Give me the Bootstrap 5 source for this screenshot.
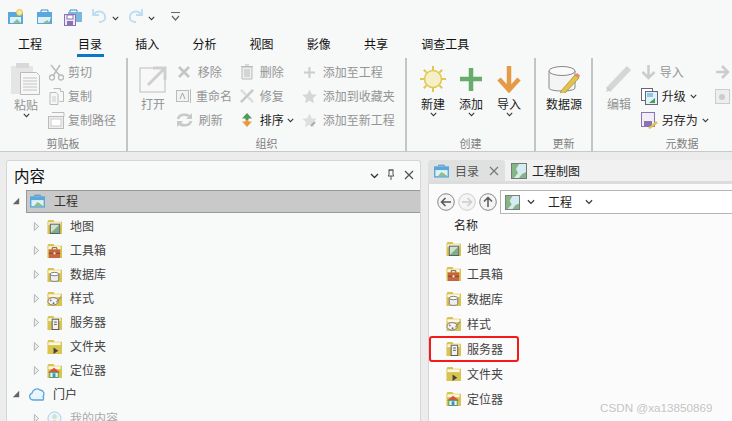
<!DOCTYPE html>
<html lang="zh"><head><meta charset="utf-8"><title>ArcGIS Pro</title>
<link href="https://cdn.jsdelivr.net/npm/bootstrap@5.3.0/dist/css/bootstrap.min.css" rel="stylesheet">
<style>
html,body{width:732px;height:421px;overflow:hidden}
body{background:#ececec;font:12px/16px "Noto Sans CJK SC","Liberation Sans",sans-serif;color:#222}
svg{display:block;flex:none}
.appshell{width:732px;height:421px;overflow:hidden}
.topband{background:#f7f8f8;height:152px;border-bottom:1px solid #c8c8c8}
.qat{height:30px;padding:8px 0 0 8px}
.qslot{width:28px}.qslotn{width:16px}.qchev{width:20px}.qlast{padding:4px 0 0 7px}
.tabrow{height:28px;padding-left:18px}
.rtab{position:relative;width:57.2px;height:28px;line-height:28px;color:#111}
.rtab.first{width:60px}
.rtab.on::after{content:"";position:absolute;left:-1px;top:24px;width:27px;height:3px;background:#0878c8}
.ribbon{height:94px}
.grp{position:relative;height:94px;border-right:2px solid #c4c5c5;flex:none}
.g1{width:128px}.g2{width:279px}.g3{width:129px}.g4{width:57px}.g5{width:178px;border:0}
.grplabel{position:absolute;left:0;right:0;top:77px;text-align:center;color:#808080;line-height:16px;font-size:11px}
.big{position:absolute;top:7px;text-align:center;color:#222;width:44px}
.big svg{margin:0 auto}
.bigtxt{height:16px;margin-top:3px}
.dim{color:#949494}
.smallcol{position:absolute;top:2px}
.sm{height:24px;display:flex;align-items:center;white-space:nowrap;gap:3px}
.chev{margin:3px auto 0}
.b1{left:4px;top:5px}.b1 .bigtxt{margin-top:1px}
.c1{left:48px}
.b2{left:3px}.c2{left:48px}.c3{left:112px}.c4{left:174px}
.b3{left:4px}.b4{left:42px}.b5{left:80px}
.b6{left:6px}.b7{left:4px}.c5{left:48px}.c6{left:122px}
.c5 .sm{gap:1px}
.c5 .sm svg+svg{margin-left:3px}
.panes{height:269px;padding-top:8px;gap:7px}
.leftpane{width:415px;margin-left:6px;background:#f8f9f9;border:1px solid #d6d6d6;border-bottom:0;border-radius:3px 3px 0 0;height:262px}
.panetitle{height:28px;padding:4px 5px 0 7px;font-size:15.5px;line-height:20px;color:#111}
.winctl{margin-left:auto;gap:6px;padding-top:4px}
.troot{height:24px;padding-left:5px}
.troot.selrow{margin-bottom:1px}
.tree-sel{margin-left:6px;flex:1;height:23px;background:#c9c9c9;border:1px solid #999;border-right:0;display:flex;align-items:center;padding-left:3px;color:#333}
.tree-sel svg{margin-right:9px}
.trow{height:24px;padding-left:26px;color:#444}
.trow .tw{margin-right:7px}
.trow svg+svg{margin-right:8px}
.rootplain{margin-left:9px;color:#333}
.rootplain svg{margin-right:7px}
.faded{color:#aaa}
.rightpane{width:304px;height:262px;background:#fbfbfb;border-left:1px solid #d6d6d6}
.ptabs{height:24px;background:#f1f1f1;border-bottom:3px solid #dcdcdc;margin-left:-1px}
.ptab{height:21px;display:flex;align-items:center;padding:0 6px;gap:6px;color:#444}
.ptab.on{background:#dfe0e0;border-radius:3px 3px 0 0;width:77px;color:#555}
.ptab.off{color:#222;padding-left:6px;gap:5px}
.navbarline{height:30px;padding:6px 0 0 8px}
.navbtn{margin:3px 3px 0 0}
.addr{flex:1;height:24px;background:#fff;border:1px solid #b5b5b5;border-right:0;display:flex;align-items:center;padding-left:4px;color:#222}
.addrlabel{margin:0 6px 0 13px}
.addrchev{margin-left:7px}
.colhead{height:22px;padding-left:25px;line-height:22px;color:#222}
.lrow{position:relative;height:25px;padding-left:17px;gap:6px;color:#444}
.lrow.mark-red::before{content:"";position:absolute;left:0;top:0;width:90px;height:26px;border:2.5px solid #f51a1a;border-radius:3px}
.wm{position:absolute;left:600px;top:400px;font:11.7px/16px "Liberation Sans",sans-serif;color:#c4c4c4;text-shadow:1px 1px 0 #fff}
</style></head><body>
<svg width="0" height="0" class="position-absolute">
<defs>
<symbol id="fold" viewBox="0 0 16 16"><path d="M.5 3 1.500 1h5.500l1 2h8v13H.5z" fill="#d9c44f"/><path d="M1.500 3.500h13v3h-13z" fill="#fbf7e0"/></symbol>
<symbol id="tri" viewBox="0 0 8 12"><path d="M1.500 1.500 6.500 6 1.500 10.500z" fill="#eee" stroke="#aaa"/></symbol>
<symbol id="case" viewBox="0 0 16 14"><path d="M5 2V.8h6V2" fill="none" stroke="#3d8fcf"/><rect y="2" width="16" height="12" fill="#5aa7dc"/><path d="M1.500 6h13v6.500h-13z" fill="#dff0f7"/><path d="M4 12.500 8 8l3 2 3.500 2.500z" fill="#8fbf8a"/></symbol>
<symbol id="mapic" viewBox="0 0 16 16"><rect x=".5" y=".5" width="15" height="15" fill="#d5ecf3" stroke="#777"/><path d="M1 1h7L5 6l2 4-4 5H1zM15 9v6H8l3-4z" fill="#86b685"/></symbol>
<symbol id="chv" viewBox="0 0 9 6"><path d="M1 1l3.500 3.500L8 1" fill="none" stroke="#333" stroke-width="1.300"/></symbol>
<symbol id="dtri" viewBox="0 0 10 10"><path d="M9 1v8H1z" fill="#666"/></symbol>
<symbol id="imap" viewBox="0 0 16 16"><use href="#fold"/><rect x="3.500" y="5.500" width="10" height="10" fill="#cde3cf" stroke="#556"/><path d="M4 15l9-9v9z" fill="#7fae86"/></symbol>
<symbol id="itool" viewBox="0 0 16 16"><use href="#fold"/><rect x="2" y="7" width="12" height="9" fill="#c8643f"/><path d="M5.500 7V5h5v2M2 11h12" fill="none" stroke="#7a4a30"/><path d="M7 10h2v2H7z" fill="#fff"/></symbol>
<symbol id="idb" viewBox="0 0 16 16"><use href="#fold"/><path d="M3.500 7.500v6.500c0 1.800 9 1.800 9 0V7.500" fill="#eee" stroke="#777"/><ellipse cx="8" cy="7.500" rx="4.500" ry="1.800" fill="#fff" stroke="#777"/></symbol>
<symbol id="istyle" viewBox="0 0 16 16"><use href="#fold"/><ellipse cx="6.500" cy="11" rx="5.500" ry="4" fill="#f3f3f3" stroke="#777"/><path d="M10 12l5-6" stroke="#998" stroke-width="1.500"/><circle cx="4" cy="10" r="1" fill="#c8643f"/><circle cx="7" cy="13" r="1" fill="#666"/></symbol>
<symbol id="isrv" viewBox="0 0 16 16"><use href="#fold"/><rect x="5.500" y="4.500" width="7" height="11" fill="#f2f2f2" stroke="#555"/><path d="M7.500 7.500h3M7.500 10h3" stroke="#555"/></symbol>
<symbol id="ifile" viewBox="0 0 16 16"><use href="#fold"/><path d="M7 9l5 3.500L7 16z" fill="#444"/></symbol>
<symbol id="iloc" viewBox="0 0 16 16"><use href="#fold"/><path d="M1 10l6.500-5L14 10" fill="#d8523e"/><rect x="3" y="10" width="9" height="5.500" fill="#e5f1f5" stroke="#4f9a5a"/><rect x="6" y="11" width="3" height="4" fill="#3d8fcf"/></symbol>
</defs></svg>
<div class="appshell d-flex flex-column">
<div class="topband">
<div class="qat d-flex align-items-start">
<div class="qslot"><svg width="17" height="17" viewBox="0 0 17 17"><rect y="4" width="15" height="12" fill="#5aa7dc"/><path d="M2 9h11v6H2z" fill="#dff0f7"/><path d="M5 15l4-4 4 4z" fill="#8fbf8a"/><circle cx="11.500" cy="4.500" r="3" fill="#f3e9a8" stroke="#dfc43f"/></svg></div>
<div class="qslot"><svg width="17" height="17" viewBox="0 0 17 17"><path d="M5 4V2h7v2" fill="none" stroke="#3d8fcf"/><rect x="1" y="4" width="15" height="12" fill="#5aa7dc"/><path d="M2 9h13l-2 6H2z" fill="#dff0f7"/><path d="M7 15l4-3 3 3z" fill="#8fbf8a"/></svg></div>
<div class="qslot"><svg width="18" height="18" viewBox="0 0 18 18"><path d="M6 4V2h7v2" fill="none" stroke="#3d8fcf"/><rect x="4" y="4" width="14" height="10" fill="#7db7de"/><rect x=".5" y="6.500" width="11" height="11" fill="#efeaf5" stroke="#8a72b5"/><rect x="3" y="7" width="6" height="4" fill="#fff" stroke="#8a72b5"/><rect x="3" y="13" width="6" height="4" fill="#8a72b5"/></svg></div>
<div class="qslotn"><svg width="15" height="15" viewBox="0 0 15 15"><path d="M2 6c3-4 10-3 11 2s-3 6-6 6" fill="none" stroke="#bcdcf2" stroke-width="1.800"/><path d="M1 1v6h6" fill="none" stroke="#bcdcf2" stroke-width="1.800"/></svg></div>
<div class="qslotn pt-2 ps-1"><svg width="7" height="5"><use href="#chv"/></svg></div>
<div class="qslotn ms-1"><svg width="15" height="15" viewBox="0 0 15 15"><path d="M13 6C10 2 3 3 2 8s3 6 6 6" fill="none" stroke="#bcdcf2" stroke-width="1.800"/><path d="M14 1v6H8" fill="none" stroke="#bcdcf2" stroke-width="1.800"/></svg></div>
<div class="qchev pt-2 ps-1"><svg width="7" height="5"><use href="#chv"/></svg></div>
<div class="qchev qlast"><svg width="9" height="10" viewBox="0 0 9 10"><path d="M0 .5h9" stroke="#666"/><path d="M1 4l3.500 4L8 4" fill="none" stroke="#666" stroke-width="1.200"/></svg></div>
</div>
<div class="tabrow d-flex">
<div class="rtab first">工程</div><div class="rtab on">目录</div><div class="rtab">插入</div><div class="rtab">分析</div><div class="rtab">视图</div><div class="rtab">影像</div><div class="rtab">共享</div><div class="rtab">调查工具</div>
</div>
<div class="ribbon d-flex">
<div class="grp g1">
<div class="big dim b1"><svg width="30" height="33" viewBox="0 0 30 33"><rect x="0" y="3" width="22" height="28" fill="#e5e5e5"/><rect x="5" y="0" width="13" height="5" fill="#d8d8d8"/><path d="M9.500 9.500h16l3 3v19h-19z" fill="#f7f7f7" stroke="#bbb"/><path d="M12 15h14M12 18h14M12 21h14M12 24h14M12 27h14" stroke="#c4c4c4"/></svg><div class="bigtxt">粘贴</div><svg class="chev" width="7" height="5"><use href="#chv"/></svg></div>
<div class="smallcol c1">
<div class="sm dim"><svg width="17" height="17" viewBox="0 0 17 17"><path d="M3 1l9 11M12 1 5 12" stroke="#bbb" stroke-width="1.500"/><circle cx="4" cy="13.500" r="2.500" fill="none" stroke="#bbb" stroke-width="1.300"/><circle cx="13" cy="13.500" r="2.500" fill="none" stroke="#bbb" stroke-width="1.300"/></svg>剪切</div>
<div class="sm dim"><svg width="17" height="17" viewBox="0 0 17 17"><path d="M5.500.5h7v3h3v10h-4M2 4.500h6l2 2v10H2z" fill="#f7f7f7" stroke="#bbb"/><path d="M4 9h4M4 11h4M4 13h4" stroke="#ccc"/></svg>复制</div>
<div class="sm dim"><svg width="17" height="17" viewBox="0 0 17 17"><path d="M4 .5h12v4" fill="none" stroke="#bbb"/><rect x=".5" y="4.500" width="15" height="12" fill="#eee" stroke="#bbb"/><rect x="3" y="7" width="10" height="7" fill="#fff" stroke="#ccc"/></svg>复制路径</div>
</div>
<div class="grplabel">剪贴板</div>
</div>
<div class="grp g2">
<div class="big dim b2"><svg width="28" height="28" viewBox="0 0 28 28"><rect x="1" y="3" width="25" height="24" fill="#f8f8f8" stroke="#bdbdbd"/><path d="M9 20 25 4M14 3h12v12" fill="none" stroke="#cfcfcf" stroke-width="3"/></svg><div class="bigtxt">打开</div></div>
<div class="smallcol c2">
<div class="sm dim"><svg width="16" height="16" viewBox="0 0 16 16"><path d="M3 3l10 10M13 3 3 13" stroke="#c4c4c4" stroke-width="2.500"/></svg>&nbsp;移除</div>
<div class="sm dim"><svg width="17" height="16" viewBox="0 0 17 16"><rect x=".5" y="2.500" width="12" height="11" fill="#f2f2f2" stroke="#bbb"/><path d="M14.500 1v14" stroke="#bbb"/><path d="M4 11l2.500-6L9 11" fill="none" stroke="#aaa"/></svg>重命名</div>
<div class="sm dim"><svg width="17" height="16" viewBox="0 0 17 16"><path d="M2 7c1-5 10-6 13-1M15 9c-1 5-10 6-13 1" fill="none" stroke="#c8c8c8" stroke-width="2.500"/><path d="M16 1v6h-6M1 15V9h6" fill="#c8c8c8"/></svg>&nbsp;刷新</div>
</div>
<div class="smallcol c3">
<div class="sm dim"><svg width="14" height="16" viewBox="0 0 14 16"><path d="M2 3h10v12H2z" fill="#eee" stroke="#bbb"/><path d="M1 2.500h12M5 1h4M5 5v8M7 5v8M9 5v8" stroke="#bbb"/></svg>&nbsp;删除</div>
<div class="sm dim"><svg width="14" height="16" viewBox="0 0 16 16"><path d="M1 15 15 1" stroke="#c8c8c8" stroke-width="3"/><path d="M1 1l6 6M9 9l6 6" stroke="#ddd" stroke-width="3"/></svg>&nbsp;修复</div>
<div class="sm sort-on"><svg width="14" height="16" viewBox="0 0 14 16"><path d="M7 1 2 6.500h3.500V8h3V6.500H12z" fill="#4f9a5a"/><path d="M7 15 2 9.500h3.500V8h3v1.500H12z" fill="#e79a3d"/></svg>&nbsp;排序 <svg width="7" height="5"><use href="#chv"/></svg></div>
</div>
<div class="smallcol c4">
<div class="sm dim"><svg width="15" height="15" viewBox="0 0 15 15"><path d="M7.500 2v11M2 7.500h11" stroke="#ccc" stroke-width="2"/></svg>&nbsp;添加至工程</div>
<div class="sm dim"><svg width="15" height="15" viewBox="0 0 15 15"><path d="M7.500.5l2.200 4.700 5 .6-3.700 3.400 1 5-4.500-2.500L3 14.200l1-5L.3 5.800l5-.6z" fill="#d6d6d6"/></svg>&nbsp;添加到收藏夹</div>
<div class="sm dim"><svg width="15" height="15" viewBox="0 0 15 15"><path d="M7.500.5l2.200 4.700 5 .6-3.700 3.400 1 5-4.500-2.500L3 14.200l1-5L.3 5.800l5-.6z" fill="#dedede"/><path d="M9 13l4-4" stroke="#aaa" stroke-width="2"/></svg>&nbsp;添加至新工程</div>
</div>
<div class="grplabel">组织</div>
</div>
<div class="grp g3">
<div class="big b3"><svg width="28" height="28" viewBox="0 0 28 28"><circle cx="14" cy="14" r="8.500" fill="#f5efc8" stroke="#e0c84f" stroke-width="1.500"/><path d="M14 1v4M14 23v4M1 14h4M23 14h4M4.800 4.800l2.800 2.800M20.400 20.400l2.800 2.800M4.800 23.200l2.800-2.800M20.400 7.600l2.800-2.800" stroke="#e0c84f" stroke-width="2"/></svg><div class="bigtxt">新建</div><svg class="chev" width="7" height="5"><use href="#chv"/></svg></div>
<div class="big b4"><svg width="28" height="28" viewBox="0 0 28 28"><path d="M14 3v23M3 14h22" stroke="#66ac6b" stroke-width="4.500"/></svg><div class="bigtxt">添加</div><svg class="chev" width="7" height="5"><use href="#chv"/></svg></div>
<div class="big b5"><svg width="28" height="28" viewBox="0 0 28 28"><path d="M14 1v24M4 14l10 11 10-11" fill="none" stroke="#e79a45" stroke-width="4.500"/></svg><div class="bigtxt">导入</div><svg class="chev" width="7" height="5"><use href="#chv"/></svg></div>
<div class="grplabel">创建</div>
</div>
<div class="grp g4">
<div class="big b6"><svg width="32" height="28" viewBox="0 0 32 28"><path d="M1 6v17c0 4 26 4 26 0V6" fill="#f4f4f4" stroke="#888"/><ellipse cx="14" cy="6" rx="13" ry="4.500" fill="#fafafa" stroke="#888"/><path d="M13 26 27 10l4 3-14 15-5 1z" fill="#e6c24a" stroke="#8a7a30" stroke-width=".6"/><path d="M27 10l2-2 3 2.500-1 2.500z" fill="#e88a70"/></svg><div class="bigtxt">数据源</div></div>
<div class="grplabel">更新</div>
</div>
<div class="grp g5">
<div class="big dim b7"><svg width="28" height="28" viewBox="0 0 28 28"><path d="M3 25 24 3" stroke="#d6d6d6" stroke-width="6"/><path d="M1 27l2-5 3 3z" fill="#ccc"/></svg><div class="bigtxt">编辑</div></div>
<div class="smallcol c5">
<div class="sm dim"><svg width="15" height="16" viewBox="0 0 15 16"><path d="M7.500 1v13M1.500 8l6 6 6-6" fill="none" stroke="#ccc" stroke-width="2.500"/></svg>&nbsp;导入</div>
<div class="sm"><svg width="17" height="17" viewBox="0 0 17 17"><rect x=".5" y=".5" width="11" height="12" fill="#fff" stroke="#667"/><rect x="4.500" y="3.500" width="12" height="13" fill="#dff2fa" stroke="#667"/><path d="M6 6h6M6 8h6" stroke="#3d9bd6"/><path d="M8 15l6-5v5z" fill="#4f9a5a"/></svg>&nbsp;升级 <svg width="7" height="5"><use href="#chv"/></svg></div>
<div class="sm"><svg width="17" height="17" viewBox="0 0 17 17"><rect x=".5" y=".5" width="13" height="14" fill="#f2eef8" stroke="#8a72b5"/><rect x="3" y="9" width="8" height="5.500" fill="#8a72b5"/><path d="M7 16l8-7 2 2-8 6z" fill="#e6c24a"/></svg>&nbsp;另存为 <svg width="7" height="5"><use href="#chv"/></svg></div>
</div>
<div class="smallcol c6">
<div class="sm"><svg width="15" height="14" viewBox="0 0 15 14"><path d="M1 7h12M7 1l6 6-6 6" fill="none" stroke="#ccc" stroke-width="2.500"/></svg></div>
<div class="sm"><svg width="15" height="15" viewBox="0 0 15 15"><rect x=".5" y=".5" width="14" height="14" fill="#eee" stroke="#ccc"/><circle cx="7" cy="8" r="3" fill="#ccc"/></svg></div>
</div>
<div class="grplabel">元数据</div>
</div>
</div>
</div>
<div class="panes d-flex">
<section class="leftpane">
<div class="panetitle d-flex">内容
<div class="winctl d-flex align-items-start"><svg class="mt-1" width="9" height="6"><use href="#chv"/></svg><svg width="12" height="12" viewBox="0 0 12 12"><path d="M4 1h4v5l1 1H3l1-1zM6 7v4M3.500 1h5" fill="none" stroke="#555"/></svg><svg width="12" height="12" viewBox="0 0 12 12"><path d="M2 2l8 8M10 2l-8 8" stroke="#555" stroke-width="1.300"/></svg></div></div>
<div class="troot selrow d-flex align-items-center"><svg width="8" height="8"><use href="#dtri"/></svg><div class="tree-sel"><svg width="15" height="14"><use href="#case"/></svg><span>工程</span></div></div>
<div class="trow d-flex align-items-center"><svg class="tw" width="7" height="11"><use href="#tri"/></svg><svg width="15" height="15"><use href="#imap"/></svg>地图</div>
<div class="trow d-flex align-items-center"><svg class="tw" width="7" height="11"><use href="#tri"/></svg><svg width="15" height="15"><use href="#itool"/></svg>工具箱</div>
<div class="trow d-flex align-items-center"><svg class="tw" width="7" height="11"><use href="#tri"/></svg><svg width="15" height="15"><use href="#idb"/></svg>数据库</div>
<div class="trow d-flex align-items-center"><svg class="tw" width="7" height="11"><use href="#tri"/></svg><svg width="15" height="15"><use href="#istyle"/></svg>样式</div>
<div class="trow d-flex align-items-center"><svg class="tw" width="7" height="11"><use href="#tri"/></svg><svg width="15" height="15"><use href="#isrv"/></svg>服务器</div>
<div class="trow d-flex align-items-center"><svg class="tw" width="7" height="11"><use href="#tri"/></svg><svg width="15" height="15"><use href="#ifile"/></svg>文件夹</div>
<div class="trow d-flex align-items-center"><svg class="tw" width="7" height="11"><use href="#tri"/></svg><svg width="15" height="15"><use href="#iloc"/></svg>定位器</div>
<div class="troot d-flex align-items-center"><svg width="8" height="8"><use href="#dtri"/></svg><div class="rootplain d-flex align-items-center"><svg width="17" height="14" viewBox="0 0 17 14"><path d="M4 13a3.500 3.500 0 0 1-1-6.800A5 5 0 0 1 11 3a4 4 0 0 1 3 6.500 3 3 0 0 1 0 3.500z" fill="#eaf5fc" stroke="#58a7dc" stroke-width="1.300"/></svg><span>门户</span></div></div>
<div class="trow d-flex align-items-center faded"><svg class="tw" width="7" height="11"><use href="#tri"/></svg><svg width="15" height="15" viewBox="0 0 16 16"><circle cx="8" cy="8" r="7" fill="#eaf5fc" stroke="#a9cde6"/><circle cx="8" cy="6" r="2.500" fill="#cfe3c8"/><path d="M3 14c1-5 9-5 10 0z" fill="#b5d6ae"/></svg>我的内容</div>
</section>
<section class="rightpane flex-grow-1">
<div class="ptabs d-flex">
<div class="ptab on"><svg width="15" height="14"><use href="#case"/></svg>目录<svg class="ms-auto" width="10" height="10" viewBox="0 0 10 10"><path d="M1 1l8 8M9 1 1 9" stroke="#777" stroke-width="1.200"/></svg></div>
<div class="ptab off"><svg width="16" height="16"><use href="#mapic"/></svg>工程制图</div>
</div>
<div class="navbarline d-flex">
<svg class="navbtn" width="18" height="18" viewBox="0 0 18 18"><circle cx="9" cy="9" r="8.300" fill="#f4f4f4" stroke="#888"/><path d="M14 9H5M8.500 5 4.500 9l4 4" fill="none" stroke="#555" stroke-width="1.500"/></svg>
<svg class="navbtn" width="18" height="18" viewBox="0 0 18 18"><circle cx="9" cy="9" r="8.300" fill="#f4f4f4" stroke="#ccc"/><path d="M4 9h9M9.500 5l4 4-4 4" fill="none" stroke="#ccc" stroke-width="1.500"/></svg>
<svg class="navbtn" width="18" height="18" viewBox="0 0 18 18"><circle cx="9" cy="9" r="8.300" fill="#f4f4f4" stroke="#888"/><path d="M9 14V5M5 8.500l4-4 4 4" fill="none" stroke="#555" stroke-width="1.500"/></svg>
<div class="addr"><svg width="15" height="15"><use href="#mapic"/></svg><svg class="addrchev" width="8" height="6"><use href="#chv"/></svg><span class="addrlabel">工程</span><svg class="addrchev" width="8" height="6"><use href="#chv"/></svg></div>
</div>
<div class="colhead">名称</div>
<div class="lrow d-flex align-items-center"><svg width="15" height="15"><use href="#imap"/></svg>地图</div>
<div class="lrow d-flex align-items-center"><svg width="15" height="15"><use href="#itool"/></svg>工具箱</div>
<div class="lrow d-flex align-items-center"><svg width="15" height="15"><use href="#idb"/></svg>数据库</div>
<div class="lrow d-flex align-items-center"><svg width="15" height="15"><use href="#istyle"/></svg>样式</div>
<div class="lrow mark-red d-flex align-items-center"><svg width="15" height="15"><use href="#isrv"/></svg>服务器</div>
<div class="lrow d-flex align-items-center"><svg width="15" height="15"><use href="#ifile"/></svg>文件夹</div>
<div class="lrow d-flex align-items-center"><svg width="15" height="15"><use href="#iloc"/></svg>定位器</div>
</section>
</div>
</div>
<div class="wm">CSDN @xa13850869</div>
</body></html>
